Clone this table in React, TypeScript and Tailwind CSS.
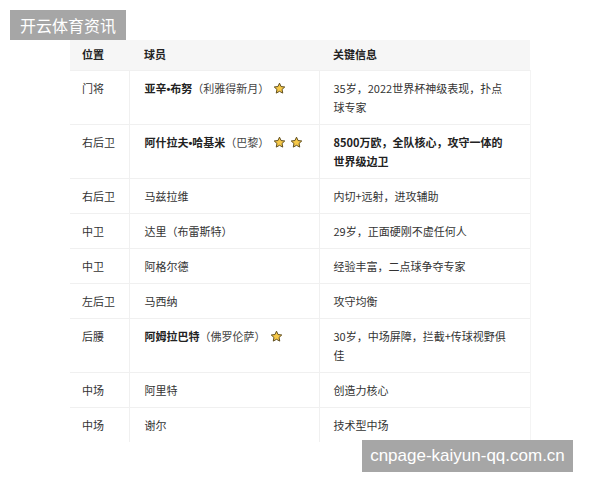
const rows: {
  pos: string;
  name: [string, string];
  club?: string;
  bold?: boolean;
  stars?: number;
  info: string[];
  infoBold?: boolean;
}[] = [
  { pos: "门将", name: ["亚辛", "布努"], club: "（利雅得新月）", bold: true, stars: 1, info: ["35岁，2022世界杯神级表现，扑点", "球专家"] },
  { pos: "右后卫", name: ["阿什拉夫", "哈基米"], club: "（巴黎）", bold: true, stars: 2, info: ["8500万欧，全队核心，攻守一体的", "世界级边卫"], infoBold: true },
  { pos: "右后卫", name: ["马兹拉维", ""], info: ["内切+远射，进攻辅助"] },
  { pos: "中卫", name: ["达里（布雷斯特）", ""], info: ["29岁，正面硬刚不虚任何人"] },
  { pos: "中卫", name: ["阿格尔德", ""], info: ["经验丰富，二点球争夺专家"] },
  { pos: "左后卫", name: ["马西纳", ""], info: ["攻守均衡"] },
  { pos: "后腰", name: ["阿姆拉巴特", ""], club: "（佛罗伦萨）", bold: true, stars: 1, info: ["30岁，中场屏障，拦截+传球视野俱", "佳"] },
  { pos: "中场", name: ["阿里特", ""], info: ["创造力核心"] },
  { pos: "中场", name: ["谢尔", ""], info: ["技术型中场"] },
];

function Star() {
  return (
    <svg width="13" height="13" viewBox="0 0 24 24" className="inline-block align-[-2px]">
      <path
        d="M12 2.2l2.9 6.2 6.8.8-5 4.6 1.3 6.7L12 17.2l-6 3.3 1.3-6.7-5-4.6 6.8-.8z"
        fill="#f7c948"
        stroke="#5b4a1c"
        strokeWidth="1.8"
        strokeLinejoin="round"
      />
    </svg>
  );
}

export default function App() {
  return (
    <div
      className="relative w-[600px] h-[480px] bg-white overflow-hidden"
      style={{ fontFamily: '"Noto Sans CJK SC", "Noto Sans", sans-serif' }}
    >
      <div className="pt-[40px] pl-[70px]">
        <table className="w-[460px] border-collapse table-fixed text-[11px] leading-[19px] text-[#333]">
          <colgroup>
            <col className="w-[59px]" />
            <col className="w-[190px]" />
            <col className="w-[211px]" />
          </colgroup>
          <thead>
            <tr className="bg-[#f6f6f6] h-[30px] font-bold text-[#222]">
              <th className="text-left font-bold pl-[12px]">位置</th>
              <th className="text-left font-bold pl-[15px]">球员</th>
              <th className="text-left font-bold pl-[14px]">关键信息</th>
            </tr>
          </thead>
          <tbody>
            {rows.map((r, i) => (
              <tr key={i} className="border-t border-[#f0f0f0] align-top">
                <td className="pl-[12px] pt-[8px] pb-[7px] border-r border-[#f0f0f0]">{r.pos}</td>
                <td className="pl-[15px] pt-[8px] pb-[7px] border-r border-[#f0f0f0] whitespace-nowrap">
                  <span className={r.bold ? "font-bold text-[#222]" : ""}>
                    {r.name[0]}
                    {r.name[1] && (
                      <>
                        <span className="font-['Liberation_Sans']">•</span>
                        {r.name[1]}
                      </>
                    )}
                  </span>
                  {r.club && <span className="text-[#444]">{r.club}</span>}
                  {r.stars ? (
                    <span className="inline-flex gap-[4px] ml-[4px] align-[-2px]">
                      {Array.from({ length: r.stars }).map((_, j) => (
                        <Star key={j} />
                      ))}
                    </span>
                  ) : null}
                </td>
                <td className={`pl-[14px] pt-[8px] pb-[7px] border-r border-[#f4f4f4] whitespace-nowrap ${r.infoBold ? "font-bold text-[#222]" : ""}`}>
                  {r.info.map((line, j) => (
                    <div key={j}>{line}</div>
                  ))}
                </td>
              </tr>
            ))}
          </tbody>
        </table>
      </div>

      <div className="absolute left-[10px] top-[10px] h-[30px] w-[116px] pl-[10px] bg-[#a6a6a6] text-white text-[16px] leading-[30px]">
        开云体育资讯
      </div>
      <div
        className="absolute left-[362px] top-[440px] w-[211px] h-[32px] bg-[#a6a6a6] text-white text-[17px] leading-[32px] text-center"
        style={{ fontFamily: '"Liberation Sans", Arial, sans-serif' }}
      >
        cnpage-kaiyun-qq.com.cn
      </div>
    </div>
  );
}
